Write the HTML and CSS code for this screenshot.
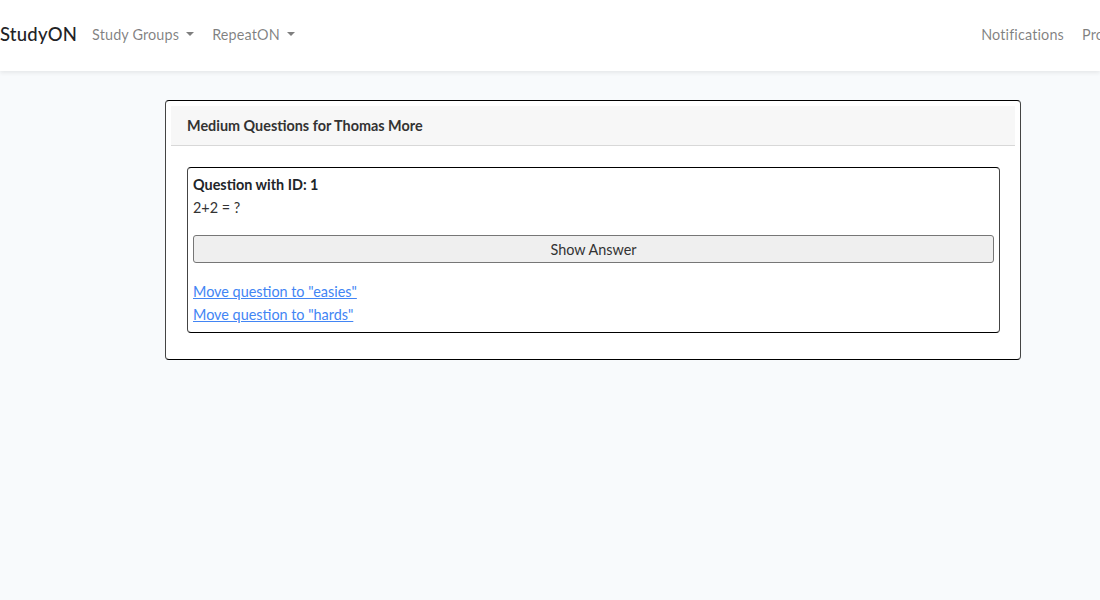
FILE: index.html
```html
<!DOCTYPE html>
<html lang="en">
<head>
<meta charset="utf-8">
<title>StudyON</title>
<link rel="stylesheet" href="styles.css">
</head>
<body>
<nav class="navbar">
  <div class="navbar-inner">
    <a class="brand" href="#">StudyON</a>
    <ul class="nav">
      <li><a class="nav-link" href="#">Study Groups<span class="caret"></span></a></li>
      <li><a class="nav-link" href="#">RepeatON<span class="caret"></span></a></li>
    </ul>
    <ul class="nav nav-right">
      <li><a class="nav-link" href="#">Notifications</a></li>
      <li><a class="nav-link" href="#">Profile<span class="caret"></span></a></li>
    </ul>
  </div>
</nav>
<main class="main">
  <div class="card">
    <div class="card-header">Medium Questions for Thomas More</div>
    <div class="card-body">
      <div class="question">
        <div class="q-title">Question with ID: 1</div>
        <p class="q-text">2+2 = ?</p>
        <button class="btn-answer" type="button">Show Answer</button>
        <div class="links">
          <a href="#" class="move-link">Move question to "easies"</a>
          <a href="#" class="move-link">Move question to "hards"</a>
        </div>
      </div>
    </div>
  </div>
</main>
</body>
</html>
```

FILE: styles.css
```css
html, body {
  margin: 0;
  padding: 0;
  overflow: hidden;
}
body {
  background: #f8fafc;
  color: #212529;
  font-family: Lato, "Open Sans", sans-serif;
  font-size: 14.4px;
  line-height: 1.6;
  height: 600px;
}
.navbar {
  background: #fff;
  box-shadow: 0 2px 4px rgba(0, 0, 0, 0.075);
  padding: 15px 0 17px;
  position: relative;
  z-index: 1;
}
.navbar-inner {
  display: flex;
  align-items: center;
  width: 1148px;
}
.brand {
  font-size: 18.5px;
  color: #1f2326;
  text-decoration: none;
  padding: 5px 0;
  margin-right: 6px;
  line-height: 28.8px;
  letter-spacing: 0.2px;
  font-weight: 500;
}
.nav {
  display: flex;
  list-style: none;
  margin: 0;
  padding: 0;
}
.nav-right {
  margin-left: auto;
}
.nav-link {
  display: block;
  padding: 8px 9px;
  color: rgba(0, 0, 0, 0.5);
  text-decoration: none;
  letter-spacing: 0.15px;
}
.caret {
  display: inline-block;
  margin-left: 7px;
  vertical-align: 0.255em;
  border-top: 0.3em solid;
  border-right: 0.3em solid transparent;
  border-left: 0.3em solid transparent;
  border-bottom: 0;
}
.main {
  padding-top: 29px;
  padding-left: 165px;
}
.card {
  width: 844px;
  background: #fff;
  border: 1px solid #000;
  border-left-color: #444;
  border-right-color: #444;
  border-radius: 4px;
  padding: 5px;
}
.card-header {
  background: rgba(0, 0, 0, 0.03);
  border-bottom: 1px solid rgba(0, 0, 0, 0.125);
  padding: 8px 16px;
  font-weight: 700;
  color: #333;
}
.card-body {
  padding: 21px 15px 21px 16px;
}
.question {
  border: 1px solid #000;
  border-left-color: #444;
  border-right-color: #444;
  border-radius: 4px;
  padding: 5px 5px 6px;
}
.q-title {
  font-weight: 700;
}
.q-text {
  margin: 0 0 16px;
  color: #333;
}
.btn-answer {
  display: block;
  width: 100%;
  height: 28px;
  background: #efefef;
  border: 1px solid #767676;
  border-radius: 3px;
  font-family: inherit;
  font-size: 14.4px;
  color: #333;
  padding: 0 6px;
  margin: 0 0 17px;
}
.links {
  display: flex;
  flex-direction: column;
  align-items: flex-start;
}
.move-link {
  color: #4285f4;
  text-decoration: underline;
}
```
